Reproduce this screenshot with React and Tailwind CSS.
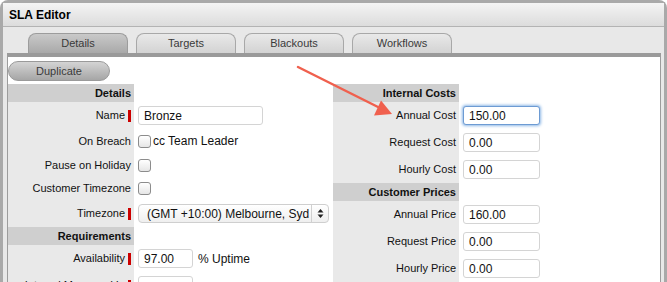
import React from "react";

function Req() {
  return <span className="inline-block w-[3px] h-[12px] bg-[#cc0000] ml-[3px]" />;
}

function Row({ label, req, tall = true, children }) {
  return (
    <div className={tall ? "flex h-[27px]" : "flex h-[24px]"}>
      <div className="w-[126px] shrink-0 bg-[#e9e9e9] flex items-center justify-end pr-[3px] text-[11px] text-[#111] whitespace-nowrap">
        {label}
        {req && <Req />}
      </div>
      <div className="flex-1 flex items-center pl-[4px] text-[12px] text-[#111] whitespace-nowrap">
        {children}
      </div>
    </div>
  );
}

function Section({ title }) {
  return (
    <div className="flex h-[18px]">
      <div className="w-[126px] shrink-0 bg-[#cfcfcf] flex items-center justify-end pr-[3px] text-[11px] font-bold text-[#111]">
        {title}
      </div>
      <div className="flex-1" />
    </div>
  );
}

function Field({ value, w, focus }) {
  return (
    <div
      className={
        focus
          ? "h-[19px] flex items-center px-[5px] bg-white border border-[#6d9bd3] rounded-[3px] shadow-[0_0_3px_1px_#8fb8e6] text-[12px]"
          : "h-[19px] flex items-center px-[5px] bg-white border border-[#d4d4d4] rounded-[3px] text-[12px]"
      }
      style={{ width: w }}
    >
      {value}
    </div>
  );
}

function Check() {
  return <span className="inline-block w-[13px] h-[13px] border border-[#8c8c8c] rounded-[3px] bg-gradient-to-b from-white to-[#e6e6e6]" />;
}

function Tab({ label, active }) {
  return (
    <div
      className={
        active
          ? "w-[100px] h-[20px] rounded-t-[8px] border border-b-0 border-[#9c9c9c] bg-gradient-to-b from-[#c9c9c9] to-[#a9a9a9] flex items-center justify-center text-[11px] text-[#3a3a3a]"
          : "w-[100px] h-[20px] rounded-t-[8px] border border-b-0 border-[#a8a8a8] bg-gradient-to-b from-[#e9e9e9] to-[#d3d3d3] flex items-center justify-center text-[11px] text-[#3a3a3a]"
      }
    >
      {label}
    </div>
  );
}

export default function App() {
  return (
    <div className="relative w-[667px] h-[282px] overflow-hidden bg-white font-['Liberation_Sans',Arial,sans-serif]">
      <div className="h-full flex flex-col border-[3px] border-b-0 border-[#a9a9a9] rounded-t-[8px] bg-[#e8e8e8]">
        <div className="h-[24px] shrink-0 flex items-center px-[6px] bg-gradient-to-b from-[#f4f4f4] to-[#dcdcdc] border-b border-[#b3b3b3] text-[12px] font-bold text-black">
          SLA Editor
        </div>

        <div className="h-[26px] shrink-0 flex items-end gap-[8px] pl-[25px]">
          <Tab label="Details" active />
          <Tab label="Targets" />
          <Tab label="Blackouts" />
          <Tab label="Workflows" />
        </div>

        <div className="flex-1 ml-[4px] mr-[3px] bg-white border-t-4 border-x border-t-[#9a9a9a] border-x-[#9c9c9c] flex flex-col">
          <div className="h-[27px] shrink-0 flex items-start pt-[4px]">
            <div className="w-[102px] h-[20px] rounded-full bg-gradient-to-b from-[#d4d4d4] to-[#a6a6a6] border border-[#9a9a9a] flex items-center justify-center text-[11px] text-[#3a3a3a]">
              Duplicate
            </div>
          </div>

          <div className="flex items-start">
            <div className="w-[325px] shrink-0">
              <Section title="Details" />
              <Row label="Name" req>
                <Field value="Bronze" w={125} />
              </Row>
              <Row label="On Breach" tall={false}>
                <Check />
                <span className="ml-[2px]">cc Team Leader</span>
              </Row>
              <Row label="Pause on Holiday" tall={false}>
                <Check />
              </Row>
              <div className="flex h-[23px]">
                <div className="w-[126px] shrink-0 bg-[#e9e9e9] flex items-center justify-end pr-[3px] text-[11px] text-[#111] whitespace-nowrap">
                  Customer Timezone
                </div>
                <div className="flex-1 flex items-center pl-[4px]">
                  <Check />
                </div>
              </div>
              <Row label="Timezone" req>
                <div className="w-[191px] h-[19px] flex items-center rounded-[4px] border border-[#cfcfcf] bg-gradient-to-b from-white to-[#efefef] text-[12px]">
                  <span className="flex-1 whitespace-nowrap pl-[8px]">(GMT +10:00) Melbourne, Syd</span>
                  <span className="w-[17px] h-full border-l border-[#d0d0d0] flex items-center justify-center">
                    <svg width="7" height="11" viewBox="0 0 7 11">
                      <path d="M3.5 1 L6.5 4.5 H0.5 Z" fill="#222" />
                      <path d="M3.5 10 L6.5 6.5 H0.5 Z" fill="#222" />
                    </svg>
                  </span>
                </div>
              </Row>
              <Section title="Requirements" />
              <Row label="Availability" req>
                <Field value="97.00" w={55} />
                <span className="ml-[5px]">% Uptime</span>
              </Row>
              <Row label="Interval Measured In" req>
                <Field value="" w={55} />
              </Row>
            </div>

            <div className="flex-1">
              <Section title="Internal Costs" />
              <Row label="Annual Cost">
                <Field value="150.00" w={77} focus />
              </Row>
              <Row label="Request Cost">
                <Field value="0.00" w={77} />
              </Row>
              <Row label="Hourly Cost">
                <Field value="0.00" w={77} />
              </Row>
              <Section title="Customer Prices" />
              <Row label="Annual Price">
                <Field value="160.00" w={77} />
              </Row>
              <Row label="Request Price">
                <Field value="0.00" w={77} />
              </Row>
              <Row label="Hourly Price">
                <Field value="0.00" w={77} />
              </Row>
            </div>
          </div>
        </div>
      </div>

      <svg className="absolute left-0 top-0 pointer-events-none" width="667" height="282">
        <line x1="298" y1="67" x2="380" y2="108" stroke="#f0604e" strokeWidth="2.5" strokeLinecap="round" />
        <path d="M392 114 L374 115.5 L381 100.5 Z" fill="#f0604e" />
      </svg>
    </div>
  );
}
